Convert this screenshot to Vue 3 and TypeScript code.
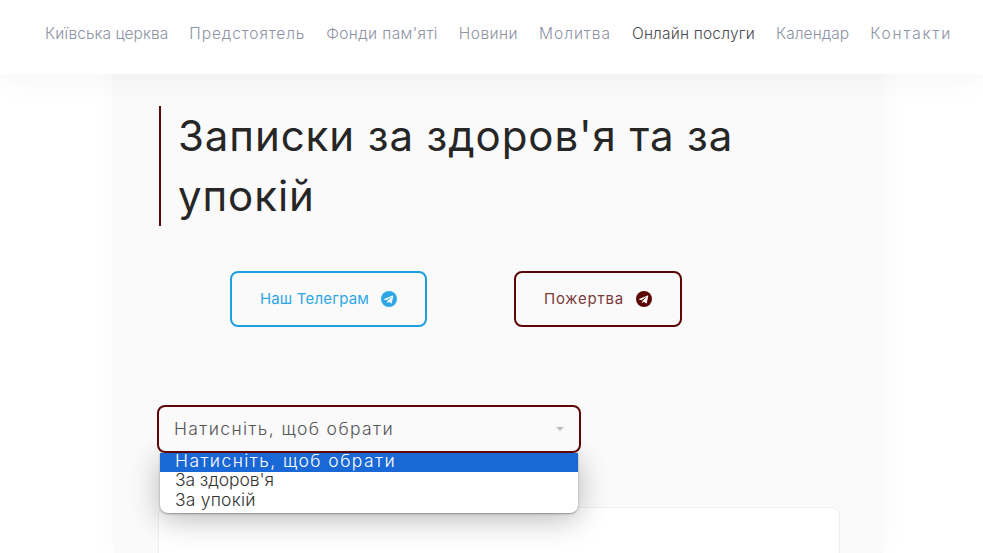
<script setup lang="ts">
interface Tracked { label: string; track: number }
const nav: Tracked[] = [
  { label: 'Київська церква', track: 0.04 },
  { label: 'Предстоятель', track: 0.9 },
  { label: "Фонди пам'яті", track: 0.37 },
  { label: 'Новини', track: 0.47 },
  { label: 'Молитва', track: 0.94 },
  { label: 'Онлайн послуги', track: 0.18 },
  { label: 'Календар', track: 0.06 },
  { label: 'Контакти', track: 1.8 },
]
const options: Tracked[] = [
  { label: 'Натисніть, щоб обрати', track: 1.43 },
  { label: "За здоров'я", track: -0.1 },
  { label: 'За упокій', track: 0.2 },
]
</script>

<template>
  <div class="page">
    <header class="header">
      <nav class="nav">
        <a
          v-for="item in nav"
          :key="item.label"
          class="nav-link"
          :class="{ active: item.label === 'Онлайн послуги' }"
          :style="{ letterSpacing: item.track + 'px' }"
        >{{ item.label }}</a>
      </nav>
    </header>
    <main class="main">
      <h1 class="title">Записки за здоров'я та за упокій</h1>
      <div class="buttons">
        <a class="btn tg">
          <span>Наш Телеграм</span>
          <svg viewBox="0 0 16 16" width="16" height="16"><circle cx="8" cy="8" r="8" fill="currentColor" /><path d="M3.2 7.9 11.6 4.6c.4-.1.7.1.6.6l-1.4 6.700c-.1.5-.4.6-.8.4L7.800 10.800 6.700 11.900c-.2.2-.3.2-.5.2l.2-2.200 4-3.600c.2-.2 0-.3-.2-.2L5.200 9.200 3.100 8.500c-.4-.1-.4-.4.1-.6Z" fill="#fff" /></svg>
        </a>
        <a class="btn donate">
          <span>Пожертва</span>
          <svg viewBox="0 0 16 16" width="16" height="16"><circle cx="8" cy="8" r="8" fill="#5c0606" /><path d="M3.2 7.9 11.6 4.6c.4-.1.7.1.6.6l-1.4 6.700c-.1.5-.4.6-.8.4L7.800 10.800 6.700 11.900c-.2.2-.3.2-.5.2l.2-2.200 4-3.600c.2-.2 0-.3-.2-.2L5.200 9.200 3.100 8.500c-.4-.1-.4-.4.1-.6Z" fill="#fff" /></svg>
        </a>
      </div>
      <div class="select-wrap">
        <div class="select">
          <span class="select-label">Натисніть, щоб обрати</span>
          <i class="caret"></i>
        </div>
        <ul class="dropdown">
          <li
            v-for="(o, i) in options"
            :key="o.label"
            :class="{ selected: i === 0 }"
            :style="{ letterSpacing: o.track + 'px' }"
          >{{ o.label }}</li>
        </ul>
      </div>
      <div class="card"></div>
    </main>
  </div>
</template>

<style>
html, body { margin: 0; height: 100%; overflow: hidden; background: #fff; }
</style>

<style scoped>
.page {
  width: 983px;
  height: 553px;
  overflow: hidden;
  font-family: "Inter", "Noto Sans", sans-serif;
  font-weight: 300;
  position: relative;
}
.header {
  height: 74px;
  box-sizing: border-box;
  background: #fff;
  display: flex;
  align-items: center;
  justify-content: flex-end;
  padding: 0 31px 8px 0;
  box-shadow: 0 2px 30px rgba(50, 80, 80, 0.07);
  position: relative;
  z-index: 2;
}
.nav { display: flex; gap: 21px; }
.nav-link { font-size: 15.5px; color: #8c93a3; white-space: nowrap; }
.nav-link.active { color: #4a4a4f; }
.main {
  width: 770px;
  margin-left: 113px;
  height: 479px;
  background: #fafafa;
  box-shadow: 0 0 30px rgba(0, 0, 0, 0.03);
  padding: 32px 43px 0 44px;
  box-sizing: border-box;
}
.title {
  margin: 0 0 0 2px;
  width: 580px;
  border-left: 2px solid #5c0606;
  padding-left: 17px;
  font-size: 42px;
  line-height: 60px;
  font-weight: 400;
  letter-spacing: 0.91px;
  color: #262626;
}
.buttons { display: flex; margin: 45px 0 0 73px; gap: 87px; }
.btn {
  height: 56px;
  box-sizing: border-box;
  border: 2px solid;
  border-radius: 8px;
  display: flex;
  align-items: center;
  justify-content: center;
  gap: 12px;
  font-size: 15px;
  font-weight: 400;
  padding-bottom: 2px;
}
.btn svg { margin-top: 2px; }
.tg { width: 197px; color: #2ea6e6; border-color: #1f9fdf; letter-spacing: 0.2px; }
.donate { width: 168px; color: #7d3a3a; border-color: #5c0606; letter-spacing: 0.8px; }
.select-wrap { position: relative; margin-top: 78px; width: 424px; }
.select {
  position: relative;
  z-index: 4;
  height: 48px;
  box-sizing: border-box;
  border: 2px solid #5c0606;
  border-radius: 8px;
  background: #fafafa;
  display: flex;
  align-items: center;
  justify-content: space-between;
  padding: 0 15px 2px 15px;
  font-size: 17.5px;
  color: #555;
}
.select-label { letter-spacing: 1.38px; }
.caret {
  width: 0;
  height: 0;
  margin-top: 2px;
  border-left: 4px solid transparent;
  border-right: 4px solid transparent;
  border-top: 4px solid #bdbdbd;
}
.dropdown {
  position: absolute;
  left: 3px;
  top: 48px;
  width: 418px;
  margin: 0;
  padding: 0 0 1px;
  list-style: none;
  background: #fff;
  border-radius: 0 0 8px 8px;
  box-shadow: 0 1px 2px rgba(0, 0, 0, 0.35), 0 6px 30px rgba(0, 0, 0, 0.28);
  z-index: 3;
  font-size: 17.5px;
  line-height: 16px;
  color: #333;
}
.dropdown li { height: 20px; padding-left: 15px; }
.dropdown li.selected { height: 19px; background: #1a67d6; color: #fff; }
.card {
  width: 682px;
  height: 300px;
  margin: 54px 0 0 1px;
  box-sizing: border-box;
  background: #fff;
  border: 1px solid #eee;
  border-radius: 8px;
}
</style>
